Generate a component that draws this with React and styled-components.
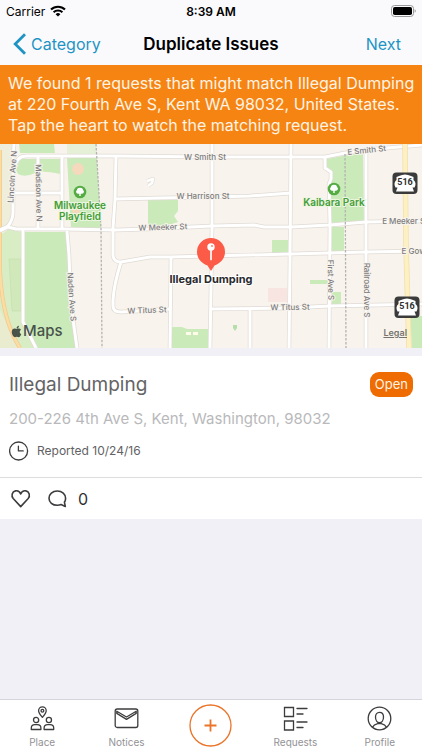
import React from 'react';
import styled, { createGlobalStyle, css } from 'styled-components';
import { FaApple } from 'react-icons/fa';

const GlobalStyle = createGlobalStyle`
  * {
    box-sizing: border-box;
  }
  body {
    margin: 0;
    background: #f1f0f7;
    font-family: Inter, 'Liberation Sans', sans-serif;
    color: #000;
  }
  button {
    padding: 0;
    border: 0;
    background: none;
    font: inherit;
    color: inherit;
    cursor: pointer;
  }
  svg {
    display: block;
  }
`;

const Screen = styled.div`
  min-height: 100vh;
  display: flex;
  flex-direction: column;
`;

const Header = styled.header`
  background: #fafafd;
`;

const ThreeColumns = styled.div`
  display: grid;
  grid-template-columns: 1fr auto 1fr;
  align-items: center;
`;

const StatusBar = styled(ThreeColumns)`
  height: 22px;
  padding: 0 6px;
  font-size: 12px;
`;

const Carrier = styled.div`
  display: flex;
  align-items: center;
  gap: 5px;
`;

const Clock = styled.time`
  font-weight: 600;
`;

const Battery = styled.div`
  justify-self: end;
`;

const NavBar = styled(ThreeColumns)`
  height: 43px;
  padding: 0 13px;
`;

const NavLink = styled.a`
  display: flex;
  align-items: center;
  gap: 5px;
  justify-self: ${({ $end }) => ($end ? 'end' : 'start')};
  padding-right: ${({ $end }) => ($end ? '8px' : 0)};
  font-size: 16px;
  color: #1e94c4;
  text-decoration: none;
`;

const Title = styled.h1`
  margin: 0;
  font-size: 17px;
  font-weight: 600;
`;

const Banner = styled.p`
  margin: 0;
  padding: 8px 4px 8px 8px;
  background: #f58412;
  color: #fff3e4;
  font-size: 16px;
  line-height: 21px;
`;

const MapArea = styled.section`
  position: relative;
  height: 204px;
  overflow: hidden;
  background: #f8f4ed;

  > svg {
    width: 100%;
    height: 100%;
  }
`;

const MapsLogo = styled.div`
  position: absolute;
  left: 10px;
  bottom: 7px;
  display: flex;
  align-items: center;
  font-size: 15px;
  line-height: 20px;
  font-weight: 500;
  color: #48534a;
`;

const LegalLink = styled.a`
  position: absolute;
  right: 15px;
  bottom: 9px;
  font-size: 9px;
  line-height: 12px;
  font-weight: 600;
  color: #77746f;
`;

const Card = styled.article`
  margin-top: 8px;
  background: #fff;
`;

const CardBody = styled.div`
  padding: 16px 9px;
  border-bottom: 1px solid #dddde0;
`;

const CardHeading = styled.div`
  display: flex;
  align-items: center;
  justify-content: space-between;
`;

const CardTitle = styled.h2`
  margin: 0;
  font-size: 19px;
  line-height: 25px;
  font-weight: 400;
  color: #646466;
`;

const Status = styled.span`
  padding: 0 5px;
  border-radius: 9px;
  background: #ee6c02;
  color: #fff3e4;
  font-size: 13px;
  line-height: 25px;
`;

const Address = styled.p`
  margin: 12px 0;
  font-size: 15px;
  line-height: 20px;
  color: #b9b9bb;
`;

const Reported = styled.div`
  display: flex;
  align-items: center;
  gap: 8px;
  font-size: 12px;
  line-height: 18px;
  color: #626264;
`;

const Actions = styled.div`
  display: flex;
  align-items: center;
  height: 41px;
  padding: 0 10px;
  gap: 16px;
`;

const ActionButton = styled.button`
  display: flex;
  align-items: center;
  gap: 10px;
  font-size: 16px;
  color: #303032;
`;

const TabBar = styled.nav`
  display: grid;
  grid-template-columns: repeat(5, 1fr);
  height: 51px;
  margin-top: auto;
  border-top: 1px solid #d5d4da;
  background: #fff;
`;

const tabLayout = css`
  display: flex;
  flex-direction: column;
  align-items: center;
`;

const Tab = styled.button`
  ${tabLayout}
  padding-top: 6px;
  gap: 4px;
  font-size: 10px;
  line-height: 14px;
  color: #929295;
`;

const AddTab = styled.button`
  ${tabLayout}
  padding-top: 4px;
`;

const iconLine = {
  fill: 'none',
  stroke: '#3c3c3e',
  strokeWidth: 1.3,
  strokeLinejoin: 'round',
  strokeLinecap: 'round',
};

const WifiIcon = () => (
  <svg width="16" height="12" viewBox="0 0 16 12" fill="none" stroke="#000" strokeWidth="2.1" aria-hidden="true">
    <path d="M1 4.6a10 10 0 0 1 14 0" />
    <path d="M3.6 7.3a6.3 6.3 0 0 1 8.8 0" />
    <path d="M8 11.6 5.6 9.2a3.4 3.4 0 0 1 4.8 0z" fill="#000" stroke="none" />
  </svg>
);

const BatteryIcon = () => (
  <svg width="25" height="12" viewBox="0 0 25 12" aria-hidden="true">
    <rect x=".5" y=".5" width="22" height="11" rx="3" fill="none" stroke="#999" />
    <rect x="2" y="2" width="19" height="8" rx="1.8" />
    <path d="M23.6 4.2q1.2.6 1.2 1.8t-1.2 1.8z" fill="#999" />
  </svg>
);

const BackIcon = () => (
  <svg width="13" height="22" viewBox="0 0 13 22" fill="none" stroke="#1e94c4" strokeWidth="2.8" aria-hidden="true">
    <path d="M12 1.2 2.2 11 12 20.8" />
  </svg>
);

const ClockIcon = () => (
  <svg width="20" height="20" viewBox="0 0 20 20" aria-hidden="true" {...iconLine}>
    <circle cx="9.6" cy="10" r="9" />
    <path d="M9.4 5.2v4.7h4.8" />
  </svg>
);

const HeartIcon = () => (
  <svg width="21" height="19" viewBox="0 0 21 19" aria-hidden="true" {...iconLine} strokeWidth="1.6">
    <path d="M10.7 17.6 3.2 9.5C1 7 2 2.5 5.5 1.9c2.3-.4 4.3.8 5.2 3 .9-2.2 2.9-3.4 5.2-3 3.5.6 4.5 5.1 2.3 7.6z" />
  </svg>
);

const CommentIcon = () => (
  <svg width="21" height="19" viewBox="0 0 21 19" aria-hidden="true" {...iconLine} strokeWidth="1.6">
    <path d="M10.3 2C5.5 2 2 5.1 2 9.2s3.5 7.1 8.3 7.1c1.5 0 2.7-.2 3.8-.7l4.2 1.8-.9-4.2c.8-1.1 1.2-2.4 1.2-4C18.6 5.1 15.1 2 10.3 2z" />
  </svg>
);

const PlaceIcon = () => (
  <svg width="25" height="25" viewBox="0 0 25 25" aria-hidden="true" {...iconLine}>
    <path d="M12.4 11.3C10.5 9 8.6 7 8.6 4.7a3.8 3.8 0 0 1 7.6 0c0 2.3-1.9 4.3-3.8 6.6z" />
    <circle cx="12.4" cy="4.8" r="1.4" />
    <circle cx="6.1" cy="14" r="2.6" />
    <circle cx="18.9" cy="14" r="2.6" />
    <path d="M1.3 23.5v-1.6c0-2.2 1.6-3.3 3.6-3.3h2.4c2 0 3.6 1.1 3.6 3.3v1.6zM14.1 23.5v-1.6c0-2.2 1.6-3.3 3.6-3.3h2.4c2 0 3.6 1.1 3.6 3.3v1.6z" />
  </svg>
);

const NoticesIcon = () => (
  <svg width="25" height="25" viewBox="0 0 25 25" aria-hidden="true" {...iconLine}>
    <rect x="1.2" y="3" width="22.6" height="18.5" rx="2" />
    <path d="M2.8 5.2 12.5 11l9.7-5.8v2.2l-9.7 6-9.7-6z" />
  </svg>
);

const AddIcon = () => (
  <svg width="43" height="43" viewBox="0 0 43 43" fill="none" stroke="#ea7428" aria-hidden="true">
    <circle cx="21.5" cy="21.5" r="20.5" strokeWidth="1.3" />
    <path d="M21.5 15.5v12M15.5 21.5h12" strokeWidth="1.8" />
  </svg>
);

const RequestsIcon = () => (
  <svg width="25" height="25" viewBox="0 0 25 25" aria-hidden="true" {...iconLine}>
    <path d="M1.5 1.5h9v9h-9zM1.5 15h9v9h-9zM14 2.5h10M14 8h6M14 16h10M14 21.5h6" strokeLinejoin="miter" />
  </svg>
);

const ProfileIcon = () => (
  <svg width="25" height="25" viewBox="0 0 25 25" aria-hidden="true" {...iconLine}>
    <circle cx="12.5" cy="12.5" r="11.3" />
    <path d="M12.5 6.3c-2.5 0-4 1.9-4 4.7 0 3.1 1.7 5.7 4 5.7s4-2.6 4-5.7c0-2.8-1.5-4.7-4-4.7z" />
    <path d="M5.5 21.2c1.2-2.4 3.3-3 5.2-3.5h3.6c1.9.5 4 1.1 5.2 3.5" />
  </svg>
);

const StreetLabel = styled.text`
  font-size: 8px;
  font-weight: 500;
  fill: #7d7c80;
  stroke: #f8f4ed;
  stroke-width: 2px;
  paint-order: stroke;
  text-anchor: middle;
`;

const ParkLabel = styled(StreetLabel)`
  font-size: 10px;
  font-weight: 600;
  fill: #459d38;
  stroke: #ecf6e0;
`;

const PinLabel = styled(StreetLabel)`
  font-size: 11px;
  font-weight: 700;
  fill: #2b2a2c;
  stroke: #fff;
`;

const ShieldNumber = styled.text`
  font-family: Roboto, sans-serif;
  font-size: 9px;
  font-weight: 700;
  fill: #303030;
  text-anchor: middle;
`;

const roads = [
  'M14 144 13 160V212Q13 220 8 226L0 230',
  'M14 168Q17 156 26 156L116 156 212 157 290 157H325L345 153 375 149 422 145',
  'M38 156V229',
  'M62 156V229',
  'M14 193H62',
  'M0 231 8 227 16 229H62L116 230 148 229 212 226 254 225 264 227 291 227 330 225 366 222 422 221',
  'M116 156 115 200 113 228V256Q114 262 121 262',
  'M115 199 160 198 212 197 250 196 291 193',
  'M212 144V228L210 348',
  'M291 144 290 260 289 348',
  'M325 157V168L331 172 331 179 329 184 330 226 329 348',
  'M366 150V348',
  'M121 262 150 257 170 257 210 256 291 254 366 252 422 251',
  'M121 262Q114 284 113 300V306Q113 312 121 312L171 309',
  'M171 257 170 348',
  'M210 309 289 308 330 306 422 304',
  'M250 309V348',
  'M23 230V322L36 348',
  'M67 231 69 255 71 305 77 348',
];

const parks = [
  'M19 144H54L55 153H20z',
  'M20 159H60V174Q42 170 35 173 25 178 18 174L16 170z',
  'M67 158H97L101 228H71z',
  'M25 232H65L68 260 70 305 76 348H38L25 321z',
  'M148 200H178V211L174 216 178 222 165 226H148z',
  'M172 327H182L187 329H208V348H172z',
  'M327 159 363 152 364 221 331 223V184L333 176 326 168z',
  'M331 227H344V252H331z',
  'M272 240H289V253H272z',
  'M310 280H328V284H310z',
  'M332 292H341V305H332z',
  'M410 316H422V348H412z',
];

const streets = [
  { name: 'W Smith St', x: 205, y: 160 },
  { name: 'W Harrison St', x: 203, y: 199 },
  { name: 'W Meeker St', x: 163, y: 230, turn: -2 },
  { name: 'E Smith St', x: 367, y: 153, turn: -6 },
  { name: 'E Meeker St', x: 405, y: 224 },
  { name: 'E Gowe St', x: 421, y: 254 },
  { name: 'W Titus St', x: 147, y: 313, turn: -2 },
  { name: 'W Titus St', x: 290, y: 310, turn: -1 },
  { name: 'Lincoln Ave N', x: 15, y: 177, turn: -86 },
  { name: 'Madison Ave N', x: 36, y: 193, turn: 89 },
  { name: 'Naden Ave S', x: 69, y: 297, turn: 86 },
  { name: 'First Ave S', x: 328, y: 280, turn: 89 },
  { name: 'Railroad Ave S', x: 364, y: 290, turn: 90 },
];

const ParkMarker = ({ x, y }) => (
  <g transform={`translate(${x} ${y})`}>
    <circle r="6.3" fill="#54ac43" />
    <path d="M-.7 4V1.8H-2a2 2 0 0 1-1-3.7A2.2 2.2 0 0 1 0-4a2.2 2.2 0 0 1 3 2.1 2 2 0 0 1-1 3.7H.7V4z" fill="#fff" />
  </g>
);

const RouteShield = ({ x, y }) => (
  <g transform={`translate(${x} ${y})`}>
    <rect x="-12.5" y="-10.5" width="25" height="21.5" rx="4" fill="#3b3b3b" />
    <path d="M-6-7Q0-10 6-7L8.5-6V-3Q12 0 9.5 4.5H7.5L9 8.5H-9L-7.5 4.5H-9.5Q-12 0-8.5-3V-6z" fill="#fff" />
    <ShieldNumber y="2">516</ShieldNumber>
  </g>
);

const StreetMap = () => (
  <svg viewBox="0 144 422 204" preserveAspectRatio="xMidYMid slice" role="img" aria-label="Street map of Kent">
    <rect y="144" width="422" height="204" fill="#f8f4ed" />
    <path d="M0 144H12V225L0 229z" fill="#eeeedb" />
    <path d="M0 235 9 229 22 232V322L34 348H0z" fill="#d9edc4" />
    <path d="M9 259H21V311H12z" fill="#d0e8ba" stroke="#c2deac" strokeWidth=".6" />
    <path d="M0 310 18 348H0z" fill="#eaecd0" />
    <path d="M67 144H96L97 154H67z" fill="#e6f0d7" />
    {parks.map((d) => (
      <path key={d} d={d} fill="#caeaba" />
    ))}
    <path d="M268 288H287V302H268z" fill="#f8e4e0" />
    <circle cx="78" cy="169" r="6" fill="#f5d9bc" />
    <circle cx="76" cy="211" r="4" fill="#f5d9bc" />
    <path d="M186 332h5v3h-5zM193 332h5v3h-5z" fill="#fffbea" />
    <path d="M233 325h4v3l-2 3-2-3z" fill="#b5deaa" />
    <path d="m147 181 6-2-1 4-4 3" fill="none" stroke="#e3dfda" strokeWidth="4" strokeLinejoin="round" />
    <path d="m147 181 6-2-1 4-4 3" fill="none" stroke="#fff" strokeWidth="2.5" strokeLinejoin="round" />
    <path d="M0 150V270Q2 320 20 348" fill="none" stroke="#f3c98d" strokeWidth="4" />
    <path d="M0 150V270Q2 320 20 348" fill="none" stroke="#fbdda4" strokeWidth="2.5" />
    <g fill="none" stroke="#dfdad5" strokeWidth="4.4" strokeLinejoin="round">
      {roads.map((d) => (
        <path key={d} d={d} />
      ))}
    </g>
    <g fill="none" stroke="#fff" strokeWidth="3" strokeLinejoin="round">
      {roads.map((d) => (
        <path key={d} d={d} />
      ))}
    </g>
    <g fill="none" stroke="#b5b2b2" strokeWidth="1.3" strokeDasharray="2.5 1.5">
      <path d="M96 144 101 228 102 348" />
      <path d="M345 154 346 348" />
    </g>
    <path d="M405 144 406 245 409 348" fill="none" stroke="#f2dfa9" strokeWidth="5.5" />
    <path d="M405 144 406 245 409 348" fill="none" stroke="#fdf1c4" strokeWidth="4" />
    {streets.map(({ name, x, y, turn = 0 }) => (
      <StreetLabel key={name + x} transform={`translate(${x} ${y}) rotate(${turn})`}>
        {name}
      </StreetLabel>
    ))}
    <ParkMarker x={80} y={192} />
    <ParkLabel x="80" y="209">Milwaukee</ParkLabel>
    <ParkLabel x="80" y="220">Playfield</ParkLabel>
    <ParkMarker x={334} y={189} />
    <ParkLabel x="334" y="206">Kaibara Park</ParkLabel>
    <RouteShield x={405} y={183} />
    <RouteShield x={407} y={307} />
    <path d="M197 252a14 14 0 1 1 28 0c0 7-5 11.500-10.500 13.500L211 271l-3.500-5.500C202 263.500 197 259 197 252z" fill="#fc5b48" />
    <circle cx="211" cy="247" r="3.7" fill="#fff" />
    <circle cx="212" cy="246" r="1.1" fill="#fc8a7b" />
    <path d="M211 249v10.500" stroke="#fff" strokeWidth="1.7" strokeLinecap="round" />
    <PinLabel x="211" y="283">Illegal Dumping</PinLabel>
  </svg>
);

const App = () => (
  <Screen>
    <GlobalStyle />
    <Header>
      <StatusBar>
        <Carrier>
          Carrier
          <WifiIcon />
        </Carrier>
        <Clock>8:39 AM</Clock>
        <Battery>
          <BatteryIcon />
        </Battery>
      </StatusBar>
      <NavBar>
        <NavLink href="#category">
          <BackIcon />
          Category
        </NavLink>
        <Title>Duplicate Issues</Title>
        <NavLink href="#next" $end>Next</NavLink>
      </NavBar>
    </Header>
    <Banner>
      We found 1 requests that might match Illegal Dumping at 220 Fourth Ave S, Kent WA 98032, United States. Tap the
      heart to watch the matching request.
    </Banner>
    <MapArea>
      <StreetMap />
      <MapsLogo>
        <FaApple size={13} aria-hidden="true" />
        Maps
      </MapsLogo>
      <LegalLink href="#legal">Legal</LegalLink>
    </MapArea>
    <Card>
      <CardBody>
        <CardHeading>
          <CardTitle>Illegal Dumping</CardTitle>
          <Status>Open</Status>
        </CardHeading>
        <Address>200-226 4th Ave S, Kent, Washington, 98032</Address>
        <Reported>
          <ClockIcon />
          Reported 10/24/16
        </Reported>
      </CardBody>
      <Actions>
        <ActionButton aria-label="Watch">
          <HeartIcon />
        </ActionButton>
        <ActionButton>
          <CommentIcon />
          0
        </ActionButton>
      </Actions>
    </Card>
    <TabBar>
      <Tab>
        <PlaceIcon />
        Place
      </Tab>
      <Tab>
        <NoticesIcon />
        Notices
      </Tab>
      <AddTab aria-label="Add request">
        <AddIcon />
      </AddTab>
      <Tab>
        <RequestsIcon />
        Requests
      </Tab>
      <Tab>
        <ProfileIcon />
        Profile
      </Tab>
    </TabBar>
  </Screen>
);

export default App;
